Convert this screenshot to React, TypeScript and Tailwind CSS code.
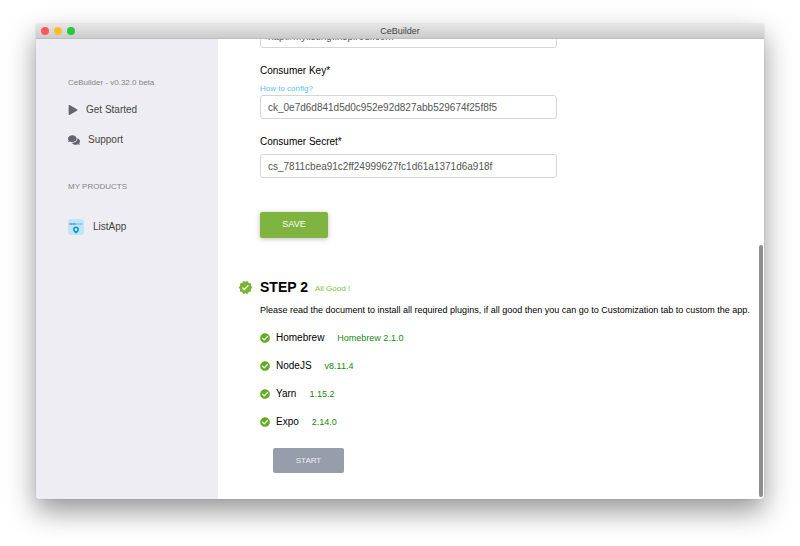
import { FaCheckCircle, FaComments, FaPlay } from "react-icons/fa";
import { MdVerified } from "react-icons/md";

const requirements = [
  { name: "Homebrew", version: "Homebrew 2.1.0" },
  { name: "NodeJS", version: "v8.11.4" },
  { name: "Yarn", version: "1.15.2" },
  { name: "Expo", version: "2.14.0" },
];

const inputClass =
  "block h-6 w-full rounded-[3px] border border-[#d6d6d6] bg-white px-[7px] text-[10px] text-[#555] outline-none";

function ListAppIcon() {
  return (
    <svg viewBox="0 0 16 16" className="size-4" aria-hidden="true">
      <rect width="16" height="16" rx="3" fill="#bfe5f6" />
      <path d="M1.500 5h6" stroke="#4a7fa0" strokeWidth="1.400" strokeDasharray="1.200 .4" />
      <path d="M8 5h6.500" stroke="#6cc4ee" strokeWidth="1.400" strokeDasharray="1.600 .4" />
      <path d="M8 7.600c-1.900 0-3 1.300-3 2.900 0 1.800 1.500 2.700 3 4.300 1.500-1.600 3-2.500 3-4.300 0-1.600-1.100-2.900-3-2.900z" fill="#1597d0" />
      <circle cx="8" cy="10.600" r="1.300" fill="#d8f1fc" />
    </svg>
  );
}

function TitleBar() {
  return (
    <header className="grid h-[15px] shrink-0 grid-cols-3 items-center border-b border-[#bdbdbd] bg-linear-to-b from-[#e6e6e6] to-[#cbcbcb] px-[5px]">
      <div className="flex gap-[5px]">
        <button type="button" aria-label="Close" className="size-2 rounded-full bg-[#fc5b57]" />
        <button type="button" aria-label="Minimize" className="size-2 rounded-full bg-[#fdbc2e]" />
        <button type="button" aria-label="Zoom" className="size-2 rounded-full bg-[#27c840]" />
      </div>
      <h1 className="text-center text-[9px] leading-[14px] text-[#444]">CeBuilder</h1>
    </header>
  );
}

function Sidebar() {
  return (
    <aside className="w-[182px] shrink-0 bg-[#eeedf3] pt-[38px] pl-8 text-[#444]">
      <p className="text-[8px] leading-3 text-[#858585]">CeBuilder - v0.32.0 beta</p>
      <nav className="mt-[13px] flex flex-col items-start gap-[14px] text-[10px] leading-4">
        <a href="#start" className="flex items-center gap-2">
          <FaPlay className="size-[10px] text-[#64656e]" />
          Get Started
        </a>
        <a href="#support" className="flex items-center gap-2">
          <FaComments className="size-3 text-[#64656e]" />
          Support
        </a>
      </nav>
      <h2 className="mt-[33px] text-[8px] leading-3 text-[#858585]">MY PRODUCTS</h2>
      <a href="#listapp" className="mt-[26px] flex items-center gap-[9px] text-[10px] leading-4">
        <ListAppIcon />
        ListApp
      </a>
    </aside>
  );
}

function SettingsForm() {
  return (
    <form className="w-[297px]" onSubmit={(e) => e.preventDefault()}>
      <input aria-label="Website URL" className={inputClass} defaultValue="http://mylisting.inspireui.com" />
      <label htmlFor="key" className="mt-[15px] block text-[10px] leading-4">
        Consumer Key*
      </label>
      <a href="#config" className="mt-1 block text-[8px] leading-3 text-[#5cbdf2]">
        How to config?
      </a>
      <input id="key" className={inputClass} defaultValue="ck_0e7d6d841d5d0c952e92d827abb529674f25f8f5" />
      <label htmlFor="secret" className="mt-[15px] mb-1 block text-[10px] leading-4">
        Consumer Secret*
      </label>
      <input id="secret" className={inputClass} defaultValue="cs_7811cbea91c2ff24999627fc1d61a1371d6a918f" />
      <button
        type="submit"
        className="mt-[34px] block h-[26px] w-[68px] rounded-[2px] bg-[#80b440] text-[9px] text-white shadow-[0_1px_5px_rgba(0,0,0,0.25)]"
      >
        SAVE
      </button>
    </form>
  );
}

export default function App() {
  return (
    <div className="h-screen overflow-hidden bg-white px-9 pt-6 pb-[47px] font-['Liberation_Sans',Arial,sans-serif] text-black">
      <div className="flex h-full flex-col overflow-hidden rounded-[3px] bg-white shadow-[0_0_1px_rgba(0,0,0,0.4),0_12px_28px_rgba(0,0,0,0.42)]">
        <TitleBar />
        <div className="flex min-h-0 flex-1">
          <Sidebar />
          <main className="relative flex min-w-0 flex-1 flex-col justify-end overflow-hidden pb-[26px] pl-[42px]">
            <SettingsForm />
            <section className="mt-[39px]">
              <div className="-ml-[22px] flex items-center gap-[7px]">
                <MdVerified className="size-[15px] text-[#79b530]" />
                <h2 className="text-[14px] leading-5 font-bold">STEP 2</h2>
                <span className="pt-1 text-[8px] leading-3 text-[#7dc242]">All Good !</span>
              </div>
              <p className="mt-[7px] text-[9px] leading-3 whitespace-nowrap">
                Please read the document to install all required plugins, if all good then you can go to Customization tab
                to custom the app.
              </p>
              <ul className="mt-[14px] flex flex-col gap-3">
                {requirements.map((item) => (
                  <li key={item.name} className="flex items-center text-[10px] leading-4">
                    <FaCheckCircle className="mr-[6px] size-[10px] text-[#63ad22]" />
                    {item.name}
                    <span className="ml-[13px] text-[9px] text-[#128a12]">{item.version}</span>
                  </li>
                ))}
              </ul>
              <button type="button" className="mt-[18px] ml-[13px] block h-[25px] w-[71px] rounded-[2px] bg-[#969eab] text-[8px] text-[#eeeeee]">
                START
              </button>
            </section>
            <div className="absolute right-px bottom-[2px] h-[252px] w-1 rounded-full bg-[#8e8e8e]" />
          </main>
        </div>
      </div>
    </div>
  );
}
